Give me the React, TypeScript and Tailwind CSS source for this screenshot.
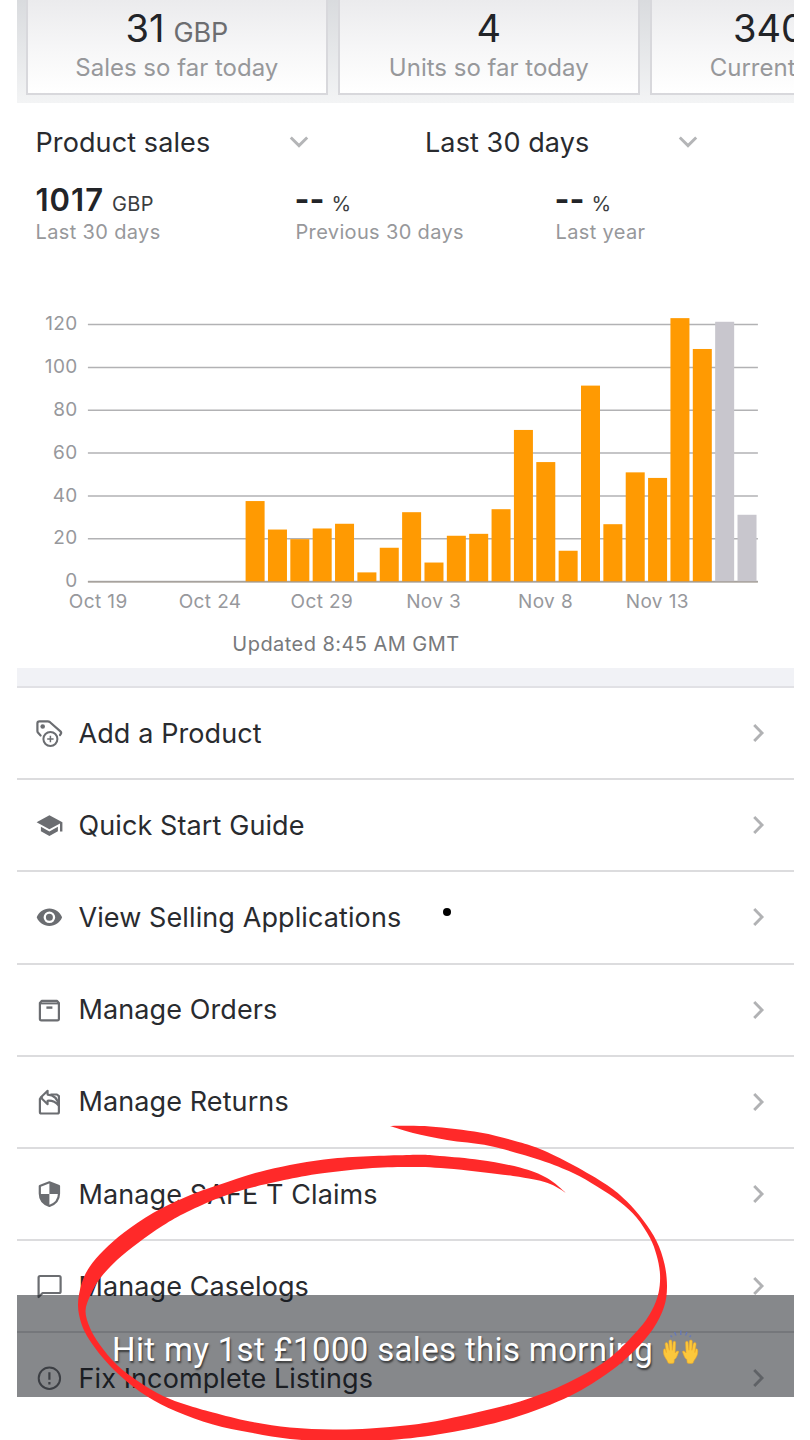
import { ReactNode } from "react";

type Point = [number, number];

const gridValues = [120, 100, 80, 60, 40, 20, 0];

const bars = [
  37.6, 24.3, 19.8, 24.8, 27, 4.3, 15.8, 32.4, 8.9, 21.4, 22.3, 33.8, 70.8, 55.8, 14.4, 91.5, 26.8, 51, 48.4, 123, 108.6,
  121.3, 31.2,
];

const dates = [
  { label: "Oct 19", x: 98.3 },
  { label: "Oct 24", x: 210.2 },
  { label: "Oct 29", x: 322 },
  { label: "Nov 3", x: 433.8 },
  { label: "Nov 8", x: 545.6 },
  { label: "Nov 13", x: 657.4 },
];

const scribble: Point[][] = [
  [
    [390, 1126], [430, 1126.5], [480, 1132.5], [515, 1141], [540, 1149], [573, 1165], [607, 1185], [626.5, 1201],
    [643, 1220], [656.5, 1241], [664.5, 1264], [667, 1287], [664, 1307], [653, 1329], [635, 1350], [610, 1371.5],
    [570, 1396], [513, 1418], [446.5, 1433], [390, 1440], [333, 1441], [290, 1439], [250, 1432.5], [213, 1424.5],
    [176.5, 1411.5], [146.5, 1396], [121, 1376.5], [103, 1358], [89.5, 1340], [81.5, 1324], [78, 1305], [81.5, 1284],
    [89.5, 1267], [104, 1250], [124, 1232.5], [153, 1213], [187, 1196.5], [220, 1184.5], [267, 1170], [333, 1158.5],
    [410, 1155], [440, 1156], [480, 1160], [520, 1167.5], [547, 1178], [565.7, 1192.7],
  ],
  [
    [565.7, 1192.7], [547, 1182.7], [513, 1176], [447, 1168.5], [407, 1167], [367, 1168.5], [317, 1174], [280, 1181],
    [250, 1188], [220, 1197.5], [187, 1212], [163, 1225.5], [138, 1243], [117, 1260], [100, 1278.5], [90.5, 1295],
    [85.5, 1311], [90, 1328], [100, 1345], [117, 1365], [140, 1382.5], [163, 1396], [187, 1405], [213, 1412.5],
    [250, 1421.5], [290, 1427.5], [333, 1429.5], [370, 1428.5], [410, 1425], [447, 1419], [513, 1403.5], [563, 1385],
    [607, 1360], [638, 1330], [651.5, 1311], [658.5, 1293], [660, 1274], [656.5, 1255], [650, 1238], [636.5, 1217.5],
    [620, 1202], [597, 1186.5], [573, 1173], [540, 1160], [490, 1146], [447, 1140], [413, 1133], [390, 1126],
  ],
];

function smooth(points: Point[]) {
  let d = "";
  for (let i = 0; i < points.length - 1; i++) {
    const a = points[Math.max(i - 1, 0)];
    const b = points[i];
    const c = points[i + 1];
    const e = points[Math.min(i + 2, points.length - 1)];
    d += `C${b[0] + (c[0] - a[0]) / 6} ${b[1] + (c[1] - a[1]) / 6} ${c[0] - (e[0] - b[0]) / 6} ${c[1] - (e[1] - b[1]) / 6} ${c[0]} ${c[1]}`;
  }
  return d;
}

function Chart() {
  return (
    <svg width="777" height="330" viewBox="17.1 300 777 330" className="block fill-[#97989c] text-[19px] tracking-[0.4px]">
      {gridValues.map((v) => {
        const y = 581.6 - v * 2.142;
        return (
          <g key={v}>
            <line x1="88" x2="758" y1={y} y2={y} stroke="#b2b2b4" strokeWidth="1.5" />
            <text x="77.8" y={y + 5.7} textAnchor="end">
              {v}
            </text>
          </g>
        );
      })}
      {bars.map((v, i) => (
        <rect
          key={i}
          x={245.7 + i * 22.36}
          y={581.6 - v * 2.142}
          width="19"
          height={v * 2.142}
          fill={i > 20 ? "#c8c6cd" : "#ff9a02"}
        />
      ))}
      <line x1="88" x2="758" y1="582" y2="582" stroke="#9a9288" strokeWidth="1.2" />
      {dates.map((d) => (
        <text key={d.label} x={d.x} y="608.4" textAnchor="middle">
          {d.label}
        </text>
      ))}
    </svg>
  );
}

function Icon({ children }: { children: ReactNode }) {
  return (
    <svg width="28" height="28" viewBox="0.6 0 28 28" fill="none" stroke="#6b6d71" strokeWidth="2.2" strokeLinejoin="round">
      {children}
    </svg>
  );
}

const rows = [
  {
    label: "Add a Product",
    icon: (
      <>
        <path d="M5.2 16.5L2.5 13.6Q2 13 2 12V4.5Q2 2.4 4 2.4H12.3Q13.6 2.4 14.6 3.2L25 12.4Q26.4 13.8 25.2 15.2L24.6 16" strokeLinecap="round" />
        <circle cx="7.3" cy="7.5" r="2.3" fill="#6b6d71" stroke="none" />
        <circle cx="15" cy="20" r="7" strokeWidth="2" />
        <path d="M15 16.8V23.2M11.8 20H18.2" strokeWidth="1.5" />
      </>
    ),
  },
  {
    label: "Quick Start Guide",
    icon: (
      <g fill="#6b6d71" stroke="none">
        <path d="M14 4.2L1.2 11.2L14 18.2L24.6 12.4V20.5H27V11.2Z" />
        <path d="M5.5 15.8V20.3L14 25L22.5 20.3V15.8L14 20.5Z" />
      </g>
    ),
  },
  {
    label: "View Selling Applications",
    icon: (
      <path
        d="M14 5.5C8.2 5.5 3.3 9 1.3 14.3C3.3 19.6 8.2 23 14 23S24.7 19.6 26.7 14.3C24.7 9 19.8 5.5 14 5.5ZM14 8.5A5.8 5.8 0 1 1 14 20.1A5.8 5.8 0 1 1 14 8.5ZM14 10.8A3.5 3.5 0 1 0 14 17.8A3.5 3.5 0 1 0 14 10.8Z"
        fill="#6b6d71"
        fillRule="evenodd"
        stroke="none"
      />
    ),
  },
  {
    label: "Manage Orders",
    icon: (
      <>
        <path d="M4.5 7V23Q4.5 24.3 6 24.3H22Q23.5 24.3 23.5 23V7L21.5 4.8H6.5Z" />
        <path d="M4.5 7.4H23.5" strokeWidth="2" />
        <path d="M11 11.6H17" strokeWidth="2.4" />
      </>
    ),
  },
  {
    label: "Manage Returns",
    icon: (
      <>
        <path d="M7 8.5L4.5 11V24Q4.5 25.5 6 25.5H22Q23.5 25.5 23.5 24V8.2L21.5 6.5H15" />
        <path d="M5.3 9.6L12.2 2.8V6.6C18 6.9 22.3 10.7 23.3 17.5C20.3 14 17 12.3 12.2 12.7V16.2Z" strokeWidth="2.1" />
      </>
    ),
  },
  {
    label: "Manage SAFE T Claims",
    icon: (
      <>
        <path d="M14 2.3L4.4 6V13.5C4.4 19.5 8.2 24 14 26C19.8 24 23.6 19.5 23.6 13.5V6Z" />
        <path d="M14 2.3V14H4.4C4.6 19.5 8.2 24 14 26V14H23.6V6Z" fill="#6b6d71" stroke="none" />
      </>
    ),
  },
  {
    label: "Manage Caselogs",
    icon: <path d="M3.2 25V5.5Q3.2 4 4.7 4H23.7Q25.2 4 25.2 5.5V19.5Q25.2 21 23.7 21H7.2Z" />,
  },
  {
    label: "Fix Incomplete Listings",
    icon: (
      <>
        <circle cx="14" cy="14.2" r="10.7" strokeWidth="2" />
        <path d="M14 8.2V15.8M14 18V20.4" strokeWidth="2.2" />
      </>
    ),
  },
];

function ChevronRight() {
  return (
    <svg width="16" height="22" viewBox="0 0 16 22" fill="none" stroke="#b1b2b4" strokeWidth="2.9">
      <path d="M2.2 3L10 11L2.2 19" />
    </svg>
  );
}

function ChevronDown() {
  return (
    <svg width="20" height="14" viewBox="0 0 20 14" fill="none" stroke="#b4b5b7" strokeWidth="2.9" className="relative -top-px">
      <path d="M1.8 2.5L10 10.6L18.2 2.5" />
    </svg>
  );
}

function StatCard({ value, unit, label }: { value: string; unit?: string; label: string }) {
  return (
    <div className="h-[94.5px] w-[302.5px] shrink-0 border-2 border-t-0 border-[#d8d8dc] bg-linear-to-b from-[#ebebed] via-[#f6f6f7] to-white text-center whitespace-nowrap">
      <div className="mt-[5px] flex h-[46px] items-baseline justify-center gap-[9px] text-[38px] leading-[46px] text-[#222428]">
        {value}
        {unit && <span className="text-[27px] tracking-[-0.2px] text-[#6c6d70]">{unit}</span>}
      </div>
      <div className="mt-[2px] text-[24px] leading-[30px] text-[#97989b]">{label}</div>
    </div>
  );
}

function Metric({ value, unit, label }: { value: string; unit: string; label: string }) {
  const dashes = value === "--";
  return (
    <div className="w-[260px] shrink-0 whitespace-nowrap">
      <div className="flex h-9 items-baseline text-[31px] leading-9 font-semibold text-[#222428]">
        <span className={dashes ? "-ml-px text-[32px] font-bold" : "tracking-[1px]"}>{value}</span>
        <span className={`text-[20px] font-normal text-[#3b3d40] ${dashes ? "ml-[7px]" : "ml-[8px] tracking-[0.4px]"}`}>
          {unit}
        </span>
      </div>
      <div className="mt-[1px] text-[20px] leading-[26px] tracking-[0.35px] text-[#97989b]">{label}</div>
    </div>
  );
}

function Hand() {
  return (
    <path
      d="M7 33C6 28 1 25 1.5 17Q1.5 14 3 14Q4.5 14 5 19L3.5 8Q3.2 5.5 5 5.4Q6.5 5.4 7 8L8.5 16L8 4Q8 2 9.7 2Q11.3 2 11.5 4L12 16L13 5.5Q13.3 3.5 14.8 3.8Q16.3 4 16 6.5L15.4 19.5Q17 16.5 19 16.8Q20.5 17.5 19 20Q17 27 14.5 28.5L14 33Q10 34.5 7 33Z"
      fill="#fcc83c"
      stroke="#eda623"
      strokeWidth="0.7"
    />
  );
}

export default function App() {
  return (
    <main className="relative h-[1440px] w-[810px] overflow-hidden bg-white font-['Inter',sans-serif]">
      <div className="ml-[16.5px] h-[1397px] w-[777px] overflow-hidden">
        <section className="flex h-[103px] gap-[9.5px] overflow-hidden bg-linear-to-b from-[#d9dbde] to-[#f3f4f5] pl-[9px]">
          <StatCard value="31" unit="GBP" label="Sales so far today" />
          <StatCard value="4" label="Units so far today" />
          <StatCard value="340" unit="GBP" label="Current balance" />
        </section>

        <section className="h-[197px] pl-[19px]">
          <div className="flex h-[79px] items-center pt-px text-[27px] tracking-[0.1px] text-[#292b2f]">
            <div className="w-[253px]">Product sales</div>
            <ChevronDown />
            <div className="ml-[116.5px] w-[253px]">Last 30 days</div>
            <ChevronDown />
          </div>
          <div className="flex">
            <Metric value="1017" unit="GBP" label="Last 30 days" />
            <Metric value="--" unit="%" label="Previous 30 days" />
            <Metric value="--" unit="%" label="Last year" />
          </div>
        </section>

        <Chart />
        <div className="h-[38px] pr-[118px] text-center text-[20px] leading-[28px] tracking-[0.45px] text-[#77797c]">
          Updated 8:45 AM GMT
        </div>
        <div className="h-[20px] border-b-2 border-[#e1e1e5] bg-[#f1f2f6]" />

        <ul>
          {rows.map((row) => (
            <li key={row.label} className="flex h-[92.2px] items-center border-b-2 border-[#dcdcde] pr-[26px] pl-[19px]">
              <Icon>{row.icon}</Icon>
              <span className="ml-[15px] flex-1 pt-[1px] text-[27px] leading-9 tracking-[0.1px] whitespace-nowrap text-[#292b2f]">
                {row.label}
              </span>
              <ChevronRight />
            </li>
          ))}
        </ul>
      </div>

      <div className="absolute top-[908px] left-[443px] size-2 rounded-full bg-black" />

      <div className="absolute top-[1295px] left-[16.5px] flex h-[102px] w-[777px] items-center bg-[#0e1117]/50 pl-[95.5px] font-['Roboto',sans-serif] text-[33px] leading-[40px] whitespace-nowrap text-white">
        <span className="mt-[7px] tracking-[0.34px] [text-shadow:1px_2px_2px_rgba(0,0,0,0.6)]">
          Hit my 1st £1000 sales this morning
        </span>
        <svg width="40" height="42" viewBox="0 0 40 42" className="mt-[8px] ml-[7.5px]">
          <g transform="translate(1.2 9.5) scale(0.84 0.74)">
            <Hand />
          </g>
          <g transform="translate(38 9.5) scale(-0.84 0.74)">
            <Hand />
          </g>
          <path d="M19.8 1.5V6M13.5 3L15 6.5M26 3L24.5 6.5M9.5 6.5L11 8M30 6.5L28.5 8" stroke="#6578bb" strokeWidth="1.3" />
        </svg>
      </div>

      <svg width="810" height="1440" viewBox="0 0 810 1440" className="pointer-events-none absolute top-0 left-0">
        <path d={`M390 1126${smooth(scribble[0])}${smooth(scribble[1])}Z`} fill="#ff2929" />
      </svg>
    </main>
  );
}
